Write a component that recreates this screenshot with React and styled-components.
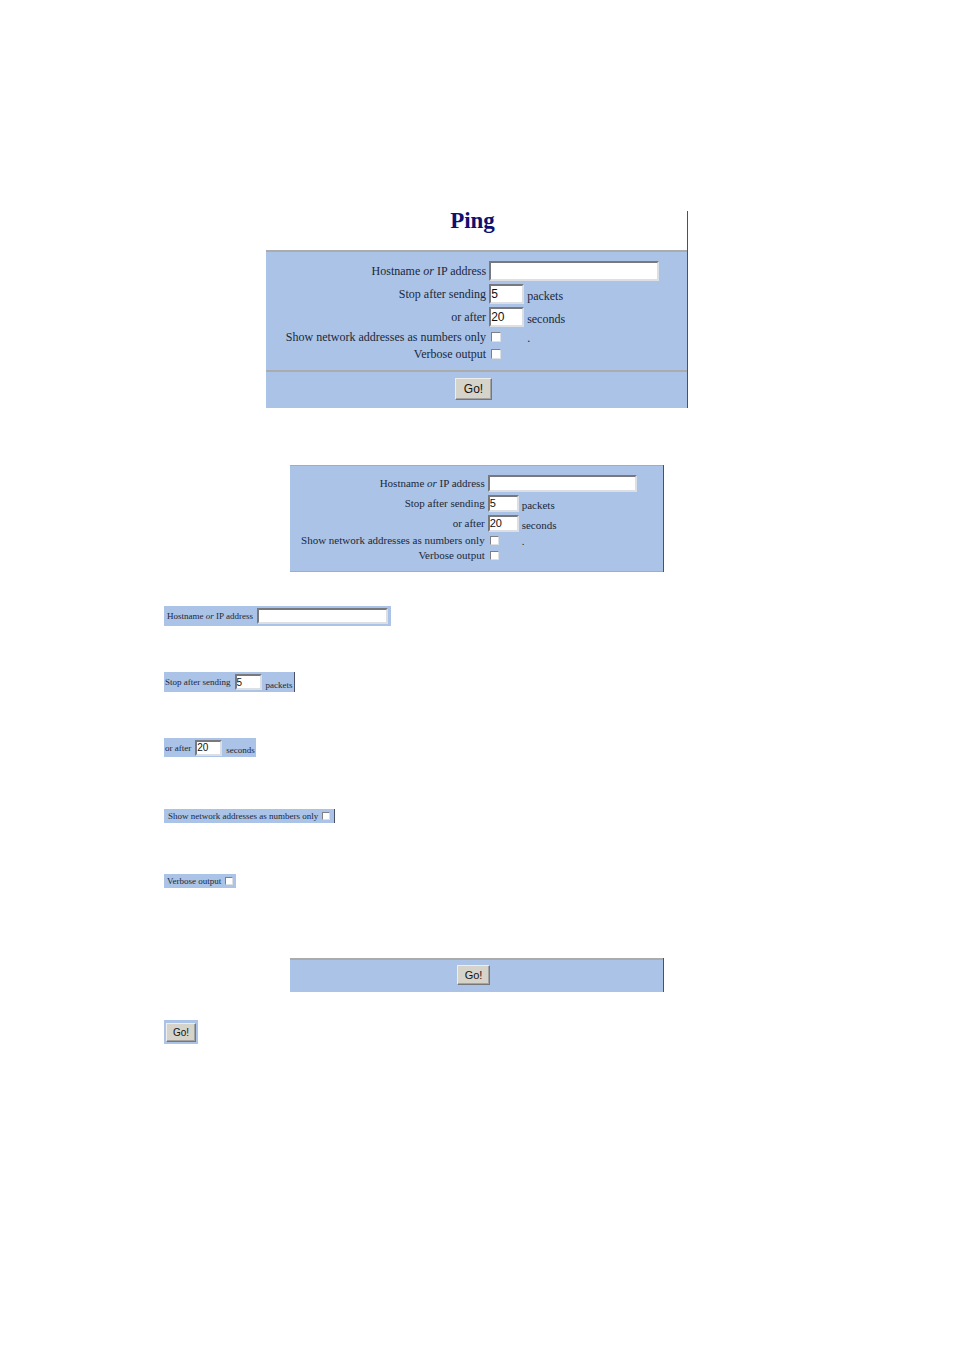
import React, { useId } from "react";
import styled, { createGlobalStyle, ThemeProvider, css } from "styled-components";

const sizes = {
  large: { text: 12, row: 23, checkRow: 17, field: 20, fieldText: 12, wide: 170, narrow: 35, box: 10, gap: 3, drop: 2, button: 22, buttonWidth: 37, buttonText: 12 },
  medium: { text: 11, row: 20, checkRow: 15, field: 17, fieldText: 11, wide: 149, narrow: 31, box: 9, gap: 3, drop: 1, button: 20, buttonWidth: 33, buttonText: 11 },
  small: { text: 9, row: 20, checkRow: 14, field: 16, fieldText: 10, wide: 131, narrow: 27, box: 8, gap: 4, drop: 1, button: 19, buttonWidth: 30, buttonText: 10 },
};

const blue = "#aac3e6";
const rule = "#a9abad";
const edge = "#4a5068";

const GlobalStyle = createGlobalStyle`
  *, *::before, *::after { box-sizing: border-box; }
  body {
    margin: 0;
    background: #fff;
    color: #20283a;
    font-family: "Liberation Serif", "Times New Roman", serif;
  }
`;

const Page = styled.main`
  max-width: 626px;
  min-height: 100vh;
  margin: 0 auto;
  padding: 211px 0 60px;
  display: flex;
  flex-direction: column;
  align-items: flex-start;
`;

const Panel = styled.form`
  align-self: center;
  width: 100%;
  max-width: ${(p) => p.$width}px;
  margin-top: ${(p) => p.$space || 0}px;
  border-right: 1px solid ${edge};
`;

const Title = styled.h1`
  margin: 0;
  height: 39px;
  padding-right: 8px;
  color: #10106e;
  font-size: 23px;
  line-height: 20px;
  font-weight: bold;
  text-align: center;
`;

const Fields = styled.div`
  padding: 7px 0 8px;
  background: ${blue};
  border-top: ${(p) => p.$rule}px solid ${rule};
  border-bottom: ${(p) => p.$end || 0}px solid ${rule};
`;

const Actions = styled.div`
  display: flex;
  align-items: center;
  justify-content: center;
  height: ${(p) => p.$height}px;
  padding: 0 6px 2px 0;
  background: ${blue};
  border-top: 2px solid ${rule};
`;

const Row = styled.div`
  display: grid;
  grid-template-columns: 53% 1fr;
  align-items: center;
  height: ${({ theme, $check }) => ($check ? theme.checkRow : theme.row)}px;
  font-size: ${({ theme }) => theme.text}px;
  line-height: ${({ theme }) => theme.text + 2}px;
`;

const Label = styled.label`
  padding-right: ${({ theme }) => theme.gap}px;
  text-align: right;
  white-space: nowrap;
`;

const Control = styled.div`
  display: flex;
  align-items: center;
  align-self: stretch;
`;

const TextField = styled.input`
  flex: none;
  width: ${({ theme, $wide }) => ($wide ? theme.wide : theme.narrow)}px;
  height: ${({ theme }) => theme.field}px;
  padding: 0;
  background: #fff;
  border: 2px solid;
  border-color: #77797d #dcdfe4 #dcdfe4 #77797d;
  border-radius: 0;
  color: #111;
  font-family: "Liberation Sans", Arial, sans-serif;
  font-size: ${({ theme }) => theme.fieldText}px;
  outline-offset: 0;
`;

const Suffix = styled.span`
  align-self: flex-end;
  padding-left: ${({ theme }) => theme.gap}px;
  padding-bottom: ${({ theme, $drop }) => ($drop ? theme.drop : 0)}px;
`;

const CheckSlot = styled.span`
  display: flex;
  width: ${({ theme }) => theme.narrow}px;
  padding-left: 2px;
`;

const CheckBox = styled.input`
  appearance: none;
  flex: none;
  width: ${({ theme }) => theme.box}px;
  height: ${({ theme }) => theme.box}px;
  margin: 0;
  background: #fff;
  border: 1px solid;
  border-color: #7c7f86 #dcdfe4 #dcdfe4 #7c7f86;

  &:checked {
    background: #333;
  }
`;

const Button = styled.button`
  width: ${({ theme }) => theme.buttonWidth}px;
  height: ${({ theme }) => theme.button}px;
  padding: 0;
  background: #d6d3cb;
  border: 1px solid;
  border-color: #f0eeea #77777a #77777a #f0eeea;
  box-shadow: inset -1px -1px #a5a39f;
  color: #111;
  font-family: "Liberation Sans", Arial, sans-serif;
  font-size: ${({ theme }) => theme.buttonText}px;
`;

const Strip = styled.form`
  display: flex;
  align-items: center;
  height: ${(p) => p.$height}px;
  margin-top: ${(p) => p.$space}px;
  padding: 0 ${(p) => p.$pad ?? 2}px;
  background: ${blue};
  font-size: ${({ theme }) => theme.text}px;
  line-height: 12px;
  ${(p) => p.$edge && css`border-right: 1px solid ${edge};`}
`;

const stay = (event) => event.preventDefault();

const HostLabel = () => (
  <span>
    Hostname <em>or</em> IP address
  </span>
);

function TextRow({ label, value, wide, suffix }) {
  const id = useId();
  return (
    <Row>
      <Label htmlFor={id}>{label}</Label>
      <Control>
        <TextField id={id} type="text" defaultValue={value} $wide={wide} />
        {suffix && <Suffix $drop>{suffix}</Suffix>}
      </Control>
    </Row>
  );
}

function CheckRow({ label, suffix }) {
  const id = useId();
  return (
    <Row $check>
      <Label htmlFor={id}>{label}</Label>
      <Control>
        <CheckSlot>
          <CheckBox id={id} type="checkbox" />
        </CheckSlot>
        {suffix && <Suffix>{suffix}</Suffix>}
      </Control>
    </Row>
  );
}

function PingFields() {
  return (
    <>
      <TextRow label={<HostLabel />} wide />
      <TextRow label="Stop after sending" value="5" suffix="packets" />
      <TextRow label="or after" value="20" suffix="seconds" />
      <CheckRow label="Show network addresses as numbers only" suffix="." />
      <CheckRow label="Verbose output" />
    </>
  );
}

function TextStrip({ label, value, wide, suffix, ...rest }) {
  const id = useId();
  return (
    <Strip onSubmit={stay} {...rest}>
      <Label htmlFor={id}>{label}</Label>
      <TextField id={id} type="text" defaultValue={value} $wide={wide} />
      {suffix && <Suffix $drop>{suffix}</Suffix>}
    </Strip>
  );
}

function CheckStrip({ label, ...rest }) {
  const id = useId();
  return (
    <Strip onSubmit={stay} {...rest}>
      <Label htmlFor={id}>{label}</Label>
      <CheckBox id={id} type="checkbox" />
    </Strip>
  );
}

export default function App() {
  return (
    <Page>
      <GlobalStyle />
      <ThemeProvider theme={sizes.large}>
        <Panel $width={422} onSubmit={stay}>
          <Title>Ping</Title>
          <Fields $rule={2}>
            <PingFields />
          </Fields>
          <Actions $height={38}>
            <Button type="submit">Go!</Button>
          </Actions>
        </Panel>
      </ThemeProvider>
      <ThemeProvider theme={sizes.medium}>
        <Panel $width={374} $space={57} onSubmit={stay}>
          <Fields $rule={1} $end={1}>
            <PingFields />
          </Fields>
        </Panel>
      </ThemeProvider>
      <ThemeProvider theme={sizes.small}>
        <TextStrip label={<HostLabel />} wide $height={20} $space={34} $pad={3} />
        <TextStrip label="Stop after sending" value="5" suffix="packets" $height={20} $space={46} $edge $pad={1} />
        <TextStrip label="or after" value="20" suffix="seconds" $height={19} $space={46} $pad={1} />
        <CheckStrip label="Show network addresses as numbers only" $height={14} $space={52} $pad={4} $edge />
        <CheckStrip label="Verbose output" $height={14} $space={51} $pad={3} />
      </ThemeProvider>
      <ThemeProvider theme={sizes.medium}>
        <Panel $width={374} $space={70} onSubmit={stay}>
          <Actions $height={34}>
            <Button type="submit">Go!</Button>
          </Actions>
        </Panel>
      </ThemeProvider>
      <ThemeProvider theme={sizes.small}>
        <Strip $height={24} $space={28} onSubmit={stay}>
          <Button type="submit">Go!</Button>
        </Strip>
      </ThemeProvider>
    </Page>
  );
}
